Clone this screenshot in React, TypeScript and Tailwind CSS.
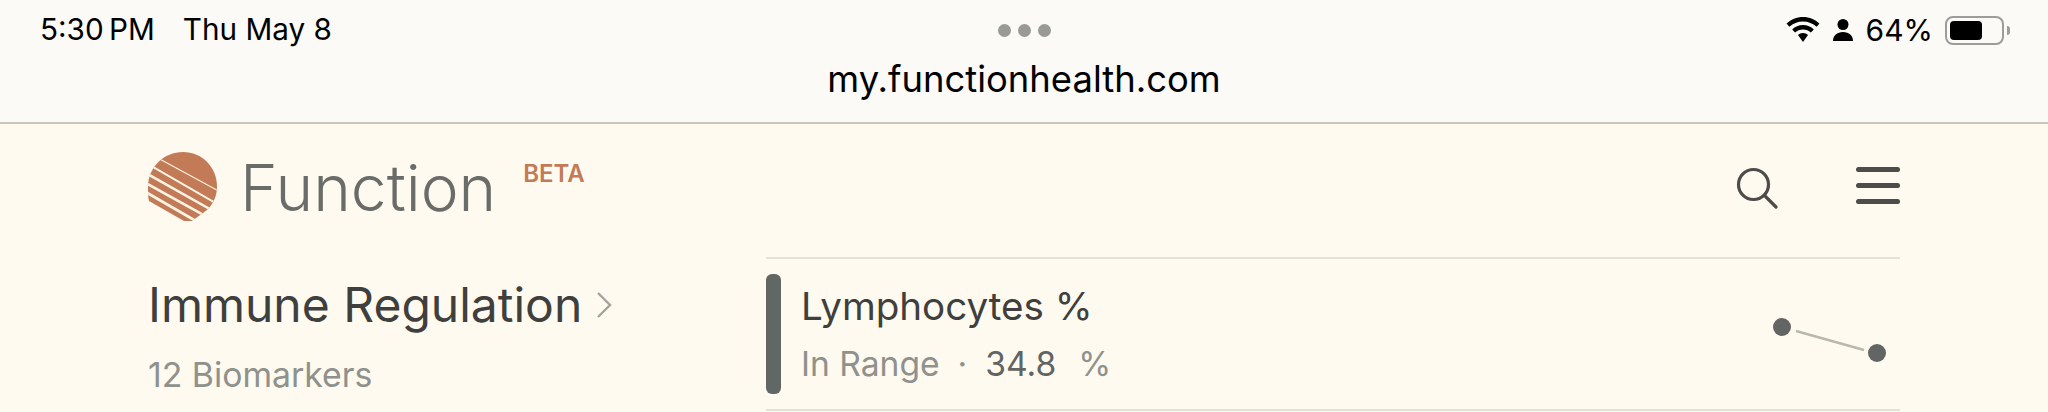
import React from "react";

function Logo() {
  return (
    <svg width="70" height="70" viewBox="0 0 70 70" className="shrink-0">
      <defs>
        <clipPath id="sun">
          <path d="M35 0C54 0 69 15 69 35C69 44 65 52 59 58L44 69L36 69L1 49C0 45 0 40 0 35C0 15 16 0 35 0Z" />
        </clipPath>
      </defs>
      <g clipPath="url(#sun)">
        <rect width="70" height="70" fill="#c27a57" />
        <g stroke="#fdf4e4" fill="none">
          <line x1="8" y1="5" x2="76" y2="42" strokeWidth="1.2" />
          <line x1="0" y1="12" x2="76" y2="56" strokeWidth="2" />
          <line x1="-4" y1="20" x2="76" y2="65" strokeWidth="2.4" />
          <line x1="-4" y1="30" x2="70" y2="71" strokeWidth="2.6" />
          <line x1="-4" y1="39" x2="60" y2="76" strokeWidth="2.8" />
        </g>
      </g>
    </svg>
  );
}

function Wifi() {
  return (
    <svg width="34" height="26" viewBox="0 0 34 26" fill="#000">
      <path d="M17 0C10.5 0 5 2.5 0.5 6.6L3.4 9.8C7 6.4 11.8 4.4 17 4.4C22.2 4.4 27 6.4 30.6 9.8L33.5 6.6C29 2.5 23.5 0 17 0Z" />
      <path d="M17 8C12.8 8 9 9.6 6.2 12.4L9.1 15.6C11.2 13.6 14 12.4 17 12.4C20 12.4 22.8 13.6 24.9 15.6L27.8 12.4C25 9.6 21.2 8 17 8Z" />
      <path d="M17 16C15 16 13.2 16.8 12 18L17 25L22 18C20.8 16.8 19 16 17 16Z" />
    </svg>
  );
}

function Person() {
  return (
    <svg width="20" height="22" viewBox="0 0 20 22" fill="#000">
      <circle cx="10" cy="5.5" r="5.5" />
      <path d="M0 22C0 16.5 4 13 10 13C16 13 20 16.5 20 22Z" />
    </svg>
  );
}

function Battery() {
  return (
    <div className="flex items-center gap-[3px]">
      <div className="h-[29px] w-[59px] rounded-[8px] border-2 border-[#9c9c9a] p-[3px]">
        <div className="h-full w-[32px] rounded-[4px] bg-black" />
      </div>
      <div className="h-[9px] w-[3px] rounded-r-full bg-[#9c9c9a]" />
    </div>
  );
}

function Search() {
  return (
    <svg width="42" height="42" viewBox="0 0 42 42" fill="none" stroke="#4c4c4b" strokeWidth="3.2" strokeLinecap="round">
      <circle cx="17.5" cy="17.5" r="15" />
      <line x1="28.5" y1="28.5" x2="40" y2="40" />
    </svg>
  );
}

function Trend() {
  return (
    <svg width="115" height="50" viewBox="0 0 115 50">
      <line x1="24" y1="14" x2="92" y2="33" stroke="#b8b8ad" strokeWidth="2.4" />
      <circle cx="10" cy="10" r="9" fill="#626563" />
      <circle cx="105" cy="36" r="9" fill="#626563" />
    </svg>
  );
}

export default function App() {
  return (
    <div className="flex h-[412px] w-[2048px] flex-col overflow-hidden bg-[#fefaef] font-['Inter',sans-serif]">
      <header className="h-[124px] shrink-0 border-b-2 border-[#c9c7bd] bg-[#fbfaf6] pt-[15px]">
        <div className="grid h-[29px] grid-cols-3 items-center pl-[40px] pr-[38px]">
          <div className="flex items-center gap-[28px] text-[29.7px] leading-none text-black">
            <span>5:30{"\u2009"}PM</span>
            <span>Thu May 8</span>
          </div>
          <div className="flex items-center justify-center gap-[7px]">
            <span className="h-[13px] w-[13px] rounded-full bg-[#999996]" />
            <span className="h-[13px] w-[13px] rounded-full bg-[#999996]" />
            <span className="h-[13px] w-[13px] rounded-full bg-[#999996]" />
          </div>
          <div className="flex items-center justify-end">
            <Wifi />
            <span className="ml-[13px]"><Person /></span>
            <span className="ml-[13px] text-[30px] leading-none text-black">64%</span>
            <span className="ml-[12px]"><Battery /></span>
          </div>
        </div>
        <div className="mt-[13px] text-center text-[36.4px] leading-[44px] text-black">my.functionhealth.com</div>
      </header>

      <div className="flex flex-1 flex-col px-[148px]">
        <nav className="flex h-[133px] shrink-0 items-start justify-between pt-[28px]">
          <div className="flex items-start">
            <Logo />
            <span className="ml-[22px] mt-[-4px] text-[64px] font-light leading-[80px] text-[#6a6c69]">Function</span>
            <span className="ml-[27px] mt-[8px] text-[24px] font-semibold leading-[28px] text-[#c27a57]">BETA</span>
          </div>
          <div className="flex items-start gap-[78px] pt-[15px]">
            <Search />
            <div className="flex w-[44px] flex-col gap-[11px]">
              <span className="h-[5px] rounded-full bg-[#4c4c4b]" />
              <span className="h-[5px] rounded-full bg-[#4c4c4b]" />
              <span className="h-[5px] rounded-full bg-[#4c4c4b]" />
            </div>
          </div>
        </nav>

        <div className="flex">
          <div className="w-[618px] shrink-0 pt-[20px]">
            <div className="flex items-center gap-[14px] text-[48px] leading-[56px] text-[#3f3f3e]">
              Immune Regulation
              <svg width="16" height="28" viewBox="0 0 16 28" fill="none" stroke="#a3a39d" strokeWidth="2.4">
                <path d="M2 2L14 14L2 26" />
              </svg>
            </div>
            <div className="mt-[22px] text-[33.8px] leading-[40px] text-[#8f918c]">12 Biomarkers</div>
          </div>
          <div className="flex h-[154px] flex-1 items-center border-y-2 border-[#e5e1d6]">
            <div className="h-[120px] w-[15px] rounded-[6px] bg-[#616765]" />
            <div className="ml-[20px] flex-1">
              <div className="mt-[-1px] text-[38.6px] leading-[44px] text-[#3f3f3e]">Lymphocytes %</div>
              <div className="mt-[16px] flex items-center text-[33.6px] leading-[40px] text-[#8f918c]">
                <span>In Range</span>
                <span className="ml-[18px]">·</span>
                <span className="ml-[18px] text-[#616462]">34.8</span>
                <span className="ml-[22px]">%</span>
              </div>
            </div>
            <div className="pr-[13px] pt-[16px]"><Trend /></div>
          </div>
        </div>
      </div>
    </div>
  );
}
